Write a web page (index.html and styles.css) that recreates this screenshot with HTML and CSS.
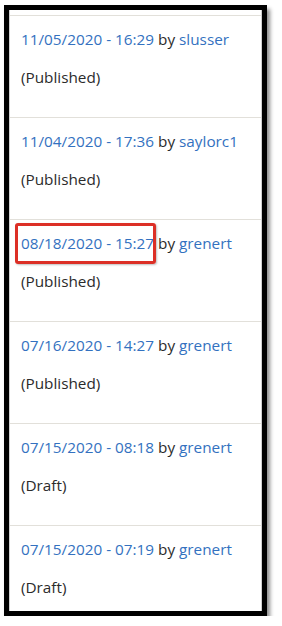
FILE: index.html
```html
<!DOCTYPE html>
<html>
<head>
<meta charset="utf-8">
<link rel="stylesheet" href="styles.css">
</head>
<body>
<div class="frame">
  <div class="list">
    <div class="rev">
      <p class="line"><a class="link" href="#">11/05/2020 - 16:29</a> by <a class="link" href="#">slusser</a></p>
      <p class="line status">(Published)</p>
    </div>
    <div class="rev">
      <p class="line"><a class="link" href="#">11/04/2020 - 17:36</a> by <a class="link" href="#">saylorc1</a></p>
      <p class="line status">(Published)</p>
    </div>
    <div class="rev">
      <p class="line"><a class="link marked" href="#">08/18/2020 - 15:27<span class="highlight"></span></a> by <a class="link" href="#">grenert</a></p>
      <p class="line status">(Published)</p>
    </div>
    <div class="rev">
      <p class="line"><a class="link" href="#">07/16/2020 - 14:27</a> by <a class="link" href="#">grenert</a></p>
      <p class="line status">(Published)</p>
    </div>
    <div class="rev">
      <p class="line"><a class="link" href="#">07/15/2020 - 08:18</a> by <a class="link" href="#">grenert</a></p>
      <p class="line status">(Draft)</p>
    </div>
    <div class="rev">
      <p class="line"><a class="link" href="#">07/15/2020 - 07:19</a> by <a class="link" href="#">grenert</a></p>
      <p class="line status">(Draft)</p>
    </div>
  </div>
</div>
</body>
</html>
```

FILE: styles.css
```css
html, body {
  margin: 0;
  padding: 0;
  background: #ffffff;
}
body {
  padding: 5px 0 0 4px;
  font-family: "Open Sans", "Noto Sans", sans-serif;
  font-size: 15.3px;
  color: #2b2b2b;
}
.frame {
  width: 253px;
  height: 601px;
  border: 5px solid #000000;
  background: #ffffff;
  overflow: hidden;
  box-shadow: 3px 4px 4px rgba(0, 0, 0, 0.45);
}
.list {
  height: 100%;
  border-left: 1px solid #cfcfcf;
  border-right: 1px solid #cfcfcf;
  padding-top: 5px;
  box-sizing: border-box;
}
.rev {
  border-top: 1px solid #e2e0da;
  padding: 13px 0 29px 11px;
}
.line {
  margin: 0;
  line-height: 21px;
  white-space: nowrap;
}
.status {
  margin-top: 17px;
}
.link {
  color: #3371c0;
  text-decoration: none;
}
.marked {
  position: relative;
}
.highlight {
  position: absolute;
  left: -6px;
  top: -10px;
  width: 135px;
  height: 35px;
  border: 3px solid #dc2f26;
  border-radius: 3px;
  box-shadow: 1px 1px 2px rgba(0, 0, 0, 0.25);
}
```
